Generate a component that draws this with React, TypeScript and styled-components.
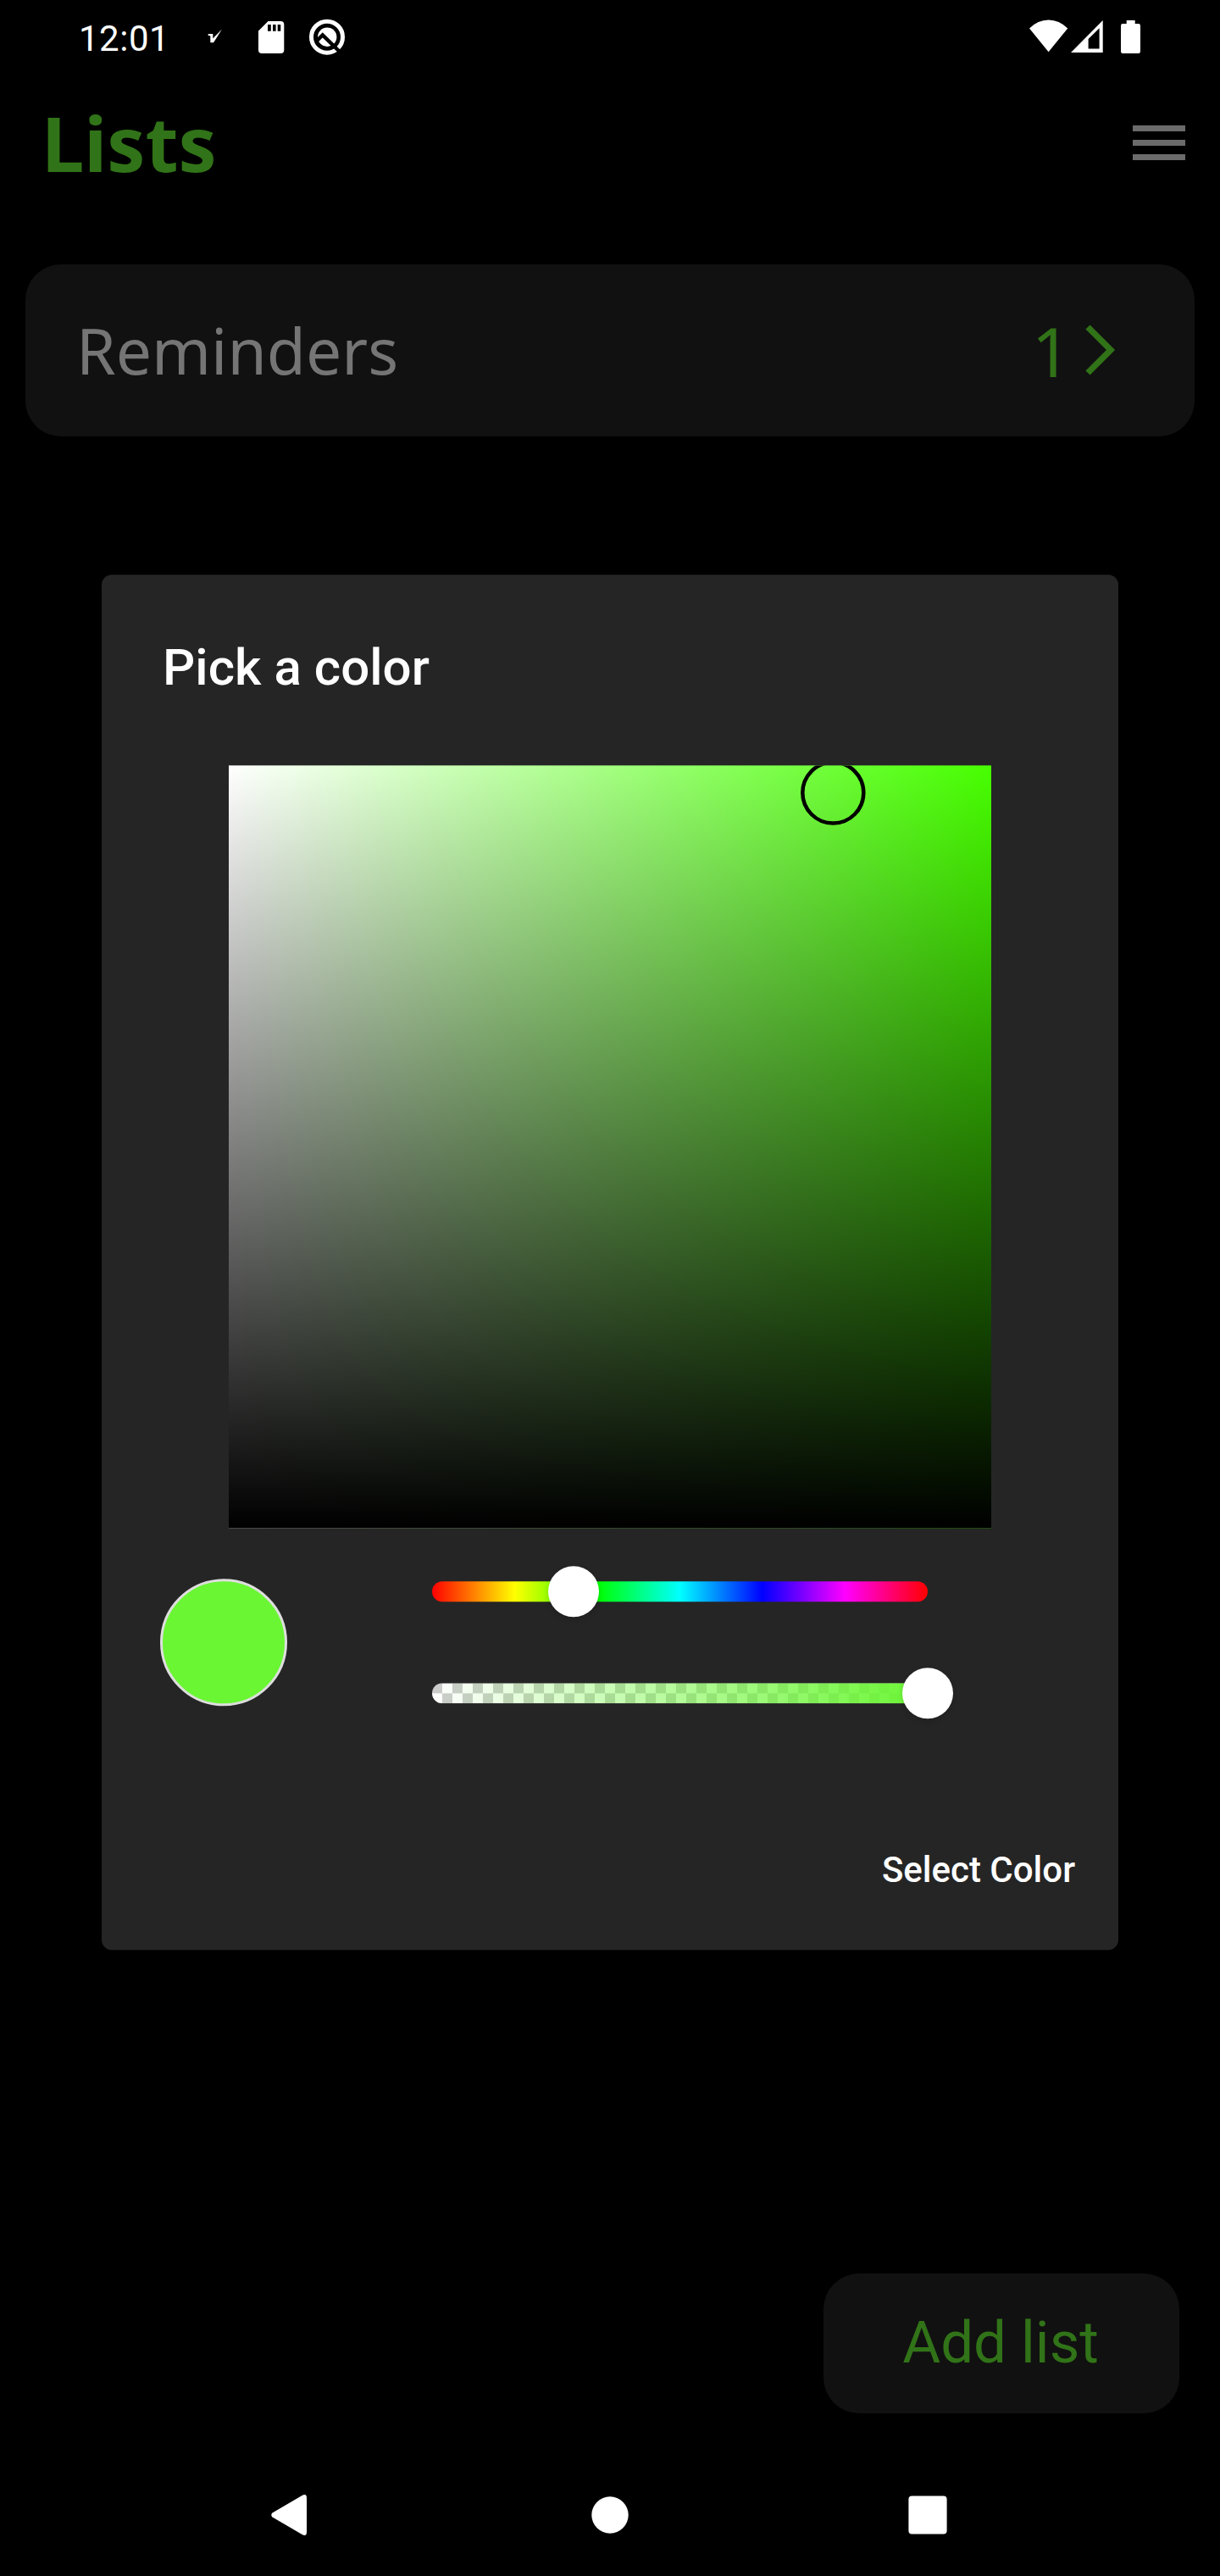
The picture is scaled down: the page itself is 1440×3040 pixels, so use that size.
import React from "react";
import styled, { createGlobalStyle } from "styled-components";

const GREEN = "#317318";
const HUE = "#47ff00";
const PICKED = "#6af633";

const GlobalStyle = createGlobalStyle`
  body { margin: 0; background: #000; }
  *, *::before, *::after { box-sizing: border-box; }
  svg { display: block; flex: none; }
  button { border: 0; padding: 0; margin: 0; background: none; }
`;

const Screen = styled.div`
  position: relative;
  display: flex;
  flex-direction: column;
  width: 1440px;
  height: 3040px;
  overflow: hidden;
  background: #000;
  font-family: Roboto, sans-serif;
`;

const StatusBar = styled.div`
  display: flex;
  align-items: flex-start;
  height: 90px;
  padding: 0 93px;
  color: #fff;
`;

const Time = styled.span`
  width: 105px;
  font-size: 42px;
  line-height: 91px;
  letter-spacing: 0.5px;
  white-space: nowrap;
`;

const StatusIcon = styled.svg<{ $gap: number }>`
  height: 90px;
  margin-left: ${(p) => p.$gap}px;
`;

const Spacer = styled.div`
  flex: 1;
`;

const Header = styled.header`
  display: flex;
  align-items: center;
  justify-content: space-between;
  height: 156px;
  padding: 0 41px 0 49px;
`;

const Heading = styled.h1`
  margin: 0;
  font: 700 90px/156px "Noto Sans", sans-serif;
  color: ${GREEN};
`;

const MenuButton = styled.button`
  display: flex;
  flex-direction: column;
  gap: 10px;
  width: 62px;
  padding-top: 1px;
`;

const MenuBar = styled.span`
  height: 7px;
  background: #6b6b6b;
`;

const ListCard = styled.section`
  display: flex;
  align-items: center;
  height: 203px;
  margin: 66px 30px 0;
  padding: 0 93px 0 60px;
  border-radius: 42px;
  background: #111;
  font-family: "Noto Sans", sans-serif;
`;

const ListName = styled.span`
  flex: 1;
  font-size: 75px;
  line-height: 203px;
  color: #757575;
`;

const ListCount = styled.span`
  margin-right: 17px;
  font-size: 81px;
  line-height: 203px;
  color: ${GREEN};
`;

const AddButton = styled.button`
  align-self: flex-end;
  width: 420px;
  height: 165px;
  margin: auto 48px 48px 0;
  padding: 0 2px 2px 0;
  border-radius: 42px;
  background: #111;
  font: 400 69px/163px Roboto, sans-serif;
  color: ${GREEN};
`;

const NavBar = styled.nav`
  display: flex;
  align-items: center;
  justify-content: space-between;
  height: 144px;
  padding: 0 322px 0 320px;
`;

const HomeIcon = styled.svg`
  margin-left: 6px;
`;

const Overlay = styled.div`
  position: absolute;
  inset: 0;
  display: flex;
  justify-content: center;
  align-items: flex-start;
  padding-top: 678px;
`;

const Dialog = styled.div`
  display: flex;
  flex-direction: column;
  width: 1200px;
  height: 1623.4px;
  border-radius: 12px;
  background: #252525;
  color: #fff;
  transform: translateY(0.33px);
`;

const DialogTitle = styled.h2`
  height: 225px;
  margin: 0;
  padding: 72px 72px 0;
  font-size: 60px;
  font-weight: 500;
  line-height: 75px;
  letter-spacing: 0.06px;
`;

const ShadeArea = styled.div`
  width: 900px;
  height: 900px;
  margin: 0 auto;
  overflow: hidden;
  background: linear-gradient(to bottom, transparent, #000 899px) no-repeat,
    linear-gradient(to right, #fff, ${HUE}) no-repeat;
`;

const Controls = styled.div`
  display: flex;
  align-items: flex-start;
  padding: 60px 0 0 69px;
`;

const Swatch = styled.div`
  width: 150px;
  height: 150px;
  border: 3px solid #dedede;
  border-radius: 50%;
  background: ${PICKED};
`;

const Sliders = styled.div`
  display: flex;
  flex-direction: column;
  gap: 96px;
  width: 585px;
  margin: 3px 0 0 171px;
`;

const Track = styled.div<{ $fill: string }>`
  position: relative;
  height: 24px;
  border-radius: 12px;
  background: ${(p) => p.$fill};
`;

const Thumb = styled.span<{ $at: number }>`
  position: absolute;
  top: -18px;
  left: ${(p) => p.$at}px;
  width: 60px;
  height: 60px;
  margin-left: -30px;
  border-radius: 50%;
  background: #fff;
  box-shadow: 0 3px 6px rgba(0, 0, 0, 0.14);
`;

const Actions = styled.div`
  display: flex;
  justify-content: flex-end;
  margin-top: auto;
  padding: 0 51px 59px 0;
`;

const TextButton = styled.button`
  font: 500 42px/70px Roboto, sans-serif;
  color: #fff;
`;

const HUES = "linear-gradient(to right, #f00, #ff0, #0f0, #0ff, #00f, #f0f, #f00)";
const ALPHA =
  `linear-gradient(to right, rgba(106,246,51,0), ${PICKED}), ` +
  "repeating-conic-gradient(#fff 0 25%, #ccc 0 50%) 0 0 / 24px 24px";

export default function App() {
  return (
    <>
      <GlobalStyle />
      <Screen>
        <StatusBar>
          <Time>12:01</Time>
          <StatusIcon $gap={47} width="18" viewBox="245 0 18 90" fill="#fff">
            <path d="M245.7 40h5.6v5.4L261.9 34.6 252 50.3h-3.7v-8l-2.6-.3z" />
          </StatusIcon>
          <StatusIcon $gap={42} width="31" viewBox="305 0 31 90" fill="#fff">
            <path
              fillRule="evenodd"
              d="M316.5 25H331.3Q335.3 25 335.3 29V59Q335.3 63 331.3 63H309Q305 63 305 59V36.5ZM316 29v7.7h3.8V29zM322 29v7.7h3.6V29zM327.7 29v7.7h3.6V29z"
            />
          </StatusIcon>
          <StatusIcon $gap={29} width="42" viewBox="365 0 42 90" fill="none">
            <circle cx="386" cy="43.7" r="18.5" stroke="#fff" strokeWidth="5" />
            <circle cx="386.2" cy="43.7" r="11.2" fill="#fff" />
            <path d="M373 49l7.8-7.6L404 64" stroke="#000" strokeWidth="4.4" />
          </StatusIcon>
          <Spacer />
          <StatusIcon $gap={0} width="46" viewBox="1215 0 46 90" fill="#fff">
            <path d="M1237.6 61.3L1215 33.6Q1225 23.6 1237.6 23.6T1260.2 33.6Z" />
          </StatusIcon>
          <StatusIcon $gap={3} width="38" viewBox="1264 0 38 90" fill="#fff">
            <path fillRule="evenodd" d="M1264 62L1301.7 24V62ZM1284.6 46V57.5H1297.6V33.2Z" />
          </StatusIcon>
          <StatusIcon $gap={21} width="24" viewBox="1323 0 24 90" fill="#fff">
            <path d="M1329.7 24h10v4h4.1q2.2 0 2.2 2.2v30.6q0 2.2-2.2 2.2h-18.6q-2.2 0-2.2-2.2v-30.6q0-2.2 2.2-2.2h4.5z" />
          </StatusIcon>
        </StatusBar>

        <Header>
          <Heading>Lists</Heading>
          <MenuButton aria-label="Menu">
            <MenuBar />
            <MenuBar />
            <MenuBar />
          </MenuButton>
        </Header>

        <ListCard>
          <ListName>Reminders</ListName>
          <ListCount>1</ListCount>
          <svg width="36" height="61" viewBox="0 0 36 61" fill="none" stroke={GREEN} strokeWidth="7.2">
            <path d="M3 3L30 30L3 57" />
          </svg>
        </ListCard>

        <AddButton>Add list</AddButton>

        <NavBar>
          <svg width="42" height="48" viewBox="0 0 42 48" fill="#fff">
            <path d="M37 .7Q42-1.5 42 4V44Q42 49.5 37 47.3L1.5 26.5Q-1 24 1.5 21.5Z" />
          </svg>
          <HomeIcon width="44" height="44" viewBox="0 0 44 44" fill="#fff">
            <circle cx="22" cy="22" r="21.7" />
          </HomeIcon>
          <svg width="46" height="46" viewBox="0 0 46 46" fill="#fff">
            <rect x=".4" y=".4" width="45.2" height="45.2" rx="4" />
          </svg>
        </NavBar>

        <Overlay>
          <Dialog role="dialog">
            <DialogTitle>Pick a color</DialogTitle>
            <ShadeArea>
              <svg width="900" height="900" viewBox="0 0 900 900" fill="none" stroke="#000" strokeWidth="4.5">
                <circle cx="713.3" cy="32.2" r="36" />
              </svg>
            </ShadeArea>
            <Controls>
              <Swatch />
              <Sliders>
                <Track $fill={HUES}>
                  <Thumb $at={167} />
                </Track>
                <Track $fill={ALPHA}>
                  <Thumb $at={585} />
                </Track>
              </Sliders>
            </Controls>
            <Actions>
              <TextButton>Select Color</TextButton>
            </Actions>
          </Dialog>
        </Overlay>
      </Screen>
    </>
  );
}
